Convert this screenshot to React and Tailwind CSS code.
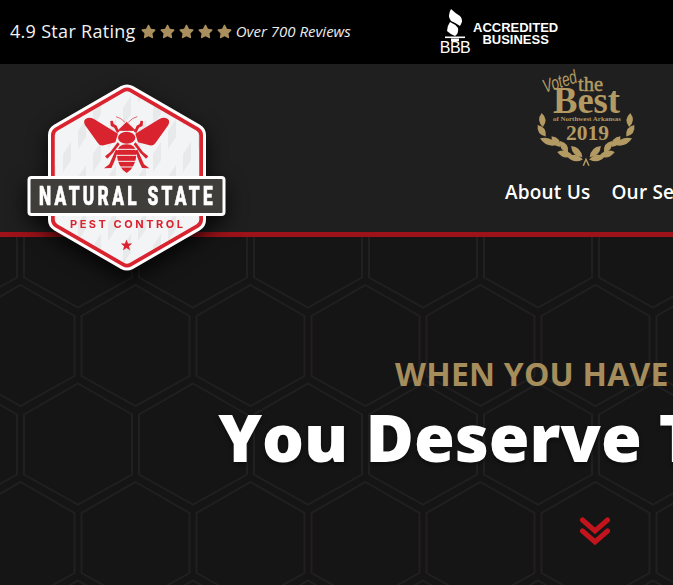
import React from "react";
import { FaStar } from "react-icons/fa";

// Background honeycomb, one outline per cell.
const hexRows = [-1, 0, 1, 2, 3, 4];
const hexCols = [-1, 0, 1, 2, 3, 4, 5, 6, 7, 8, 9, 10];

const Honeycomb = () => (
  <svg className="absolute left-0 top-0 w-[1190px] h-[348px]" viewBox="0 237 1190 348" fill="none">
    {hexRows.map((r) =>
      hexCols.map((c) => {
        const cx = 78 + c * 115 + (Math.abs(r) % 2 ? 57.5 : 0);
        const t = 186.5 + r * 98.5;
        return (
          <polygon
            key={r + "-" + c}
            points={`${cx},${t} ${cx + 54},${t + 31} ${cx + 54},${t + 91} ${cx},${t + 121} ${cx - 54},${t + 91} ${cx - 54},${t + 31}`}
            stroke="#211f1f"
            strokeWidth="2"
          />
        );
      })
    )}
  </svg>
);

const BeeHalf = () => (
  <g fill="#d9232e">
    <path d="M30 60 Q22 44 38 39 Q47 37 58 43 L129 86 L121 112 L86 121 Q74 123 68 113 Z" />
    <path d="M126 84 L118 68 L107 62 L106 48 L113 47 L116 57 L125 62 L133 80 Z" />
    <path d="M128 112 L134 118 L113 145 L97 161 L90 154 L106 141 Z" />
    <path d="M123 133 L130 138 L117 172 L109 189 L87 190 L103 178 Z" />
    <path d="M150 52 Q138 38 123 35" fill="none" stroke="#d9232e" strokeWidth="2" />
  </g>
);

const hexPoints = "127,96.5 194,135.2 194,219.8 127,258.5 60,219.8 60,135.2";

const Logo = () => (
  <svg
    className="absolute left-0 top-0 z-10 w-[240px] h-[290px] drop-shadow-[0_8px_10px_rgba(0,0,0,0.8)]"
    viewBox="0 0 240 290"
  >
    <defs>
      <pattern id="tiles" width="30" height="46" patternUnits="userSpaceOnUse">
        <rect width="30" height="46" fill="#f3f4f6" />
        <path d="M3 16 L11 4 L11 22 L3 34 Z M18 39 L26 27 L26 45 L18 57 Z M18 -7 L26 -19 L26 -1 L18 11 Z" fill="#e8e9eb" />
      </pattern>
    </defs>
    <polygon points={hexPoints} fill="#fff" stroke="#fff" strokeWidth="24" strokeLinejoin="round" />
    <polygon points={hexPoints} fill="#d9232e" stroke="#d9232e" strokeWidth="18" strokeLinejoin="round" />
    <polygon points={hexPoints} fill="url(#tiles)" stroke="url(#tiles)" strokeWidth="10.5" strokeLinejoin="round" />

    {/* bee, drawn on a 3x grid */}
    <g transform="translate(75 105) scale(0.3333)">
      <BeeHalf />
      <g transform="translate(310 0) scale(-1 1)">
        <BeeHalf />
      </g>
      <g fill="#d9232e">
        <path d="M155 52 L180 76 L130 76 Z" stroke="#d9232e" strokeWidth="3" strokeLinejoin="round" />
        <ellipse cx="155" cy="98" rx="26" ry="18" />
        <path d="M155 118 Q127 118 126 145 Q126 175 143 194 L155 204 L167 194 Q184 175 184 145 Q183 118 155 118 Z" />
      </g>
      <g stroke="#f4f5f7" strokeWidth="3">
        <line x1="124" y1="133" x2="186" y2="133" />
        <line x1="124" y1="151" x2="186" y2="151" />
        <line x1="124" y1="169" x2="186" y2="169" />
        <line x1="130" y1="186" x2="180" y2="186" />
      </g>
    </g>

    <rect x="29" y="177.5" width="195" height="37" rx="2.5" fill="#3f3e3a" stroke="#fff" strokeWidth="3" />
    <text
      x="39"
      y="205"
      fill="#fff"
      stroke="#fff"
      strokeWidth="0.6"
      fontFamily="Roboto, sans-serif"
      fontWeight="900"
      fontSize="26"
      letterSpacing="5"
      textLength="177"
      lengthAdjust="spacingAndGlyphs"
    >
      NATURAL STATE
    </text>
    <text
      x="70"
      y="228"
      fill="#d9232e"
      fontFamily="Inter, sans-serif"
      fontWeight="700"
      fontSize="11"
      textLength="113"
      lengthAdjust="spacing"
    >
      PEST CONTROL
    </text>
    <polygon
      points="126.5,239.5 128,243.4 132.2,243.6 128.9,246.2 130,250.3 126.5,248 123,250.3 124.1,246.2 120.8,243.6 125,243.4"
      fill="#d9232e"
    />
  </svg>
);

// x, y, rotation, half length
const leaves = [
  [12.3, 56, 85, 7],
  [11.7, 66.7, 55, 7],
  [18.3, 77.7, 22, 9],
  [26, 77.7, 50, 7],
  [34, 82.7, 55, 7],
  [35, 90, 15, 8],
  [46.7, 87.7, 45, 8],
  [45, 94, 10, 8],
];

const Leaf = ({ x, y, rot, len }) => (
  <path transform={`translate(${x} ${y}) rotate(${rot})`} d={`M${-len} 0 Q0 -6.5 ${len} 0 Q0 6.5 ${-len} 0 Z`} />
);

// Voted the Best award
const Award = () => (
  <svg className="w-[110px] h-[108px] shrink-0 overflow-visible" viewBox="0 0 110 108" fill="#b39a63">
    <text
      x="15"
      y="29"
      fontFamily="'Liberation Sans', sans-serif"
      fontStyle="italic"
      fontSize="19"
      textLength="35"
      lengthAdjust="spacingAndGlyphs"
      transform="rotate(-18 15 29)"
    >
      Voted
    </text>
    <text x="48" y="27" fontFamily="'Liberation Serif', serif" fontSize="22" stroke="#b39a63" strokeWidth="0.5" textLength="25" lengthAdjust="spacingAndGlyphs">
      the
    </text>
    <text x="23" y="48.5" fontFamily="'Liberation Serif', serif" fontWeight="700" fontSize="38" textLength="67" lengthAdjust="spacingAndGlyphs">
      Best
    </text>
    <text x="23" y="56.5" fontFamily="'Liberation Serif', serif" fontWeight="700" fontSize="6.5" textLength="68" lengthAdjust="spacingAndGlyphs">
      of Northwest Arkansas
    </text>
    <text x="36" y="76" fontFamily="'Liberation Serif', serif" fontWeight="700" fontSize="20" textLength="43" lengthAdjust="spacingAndGlyphs">
      2019
    </text>
    {leaves.map(([x, y, rot, len]) => (
      <g key={x + "-" + y}>
        <Leaf x={x} y={y} rot={rot} len={len} />
        <Leaf x={112 - x} y={y} rot={-rot} len={len} />
      </g>
    ))}
    <path d="M53.3 101.7 L56 95.3 L59 101.7" fill="none" stroke="#b39a63" strokeWidth="1.5" />
  </svg>
);

const BbbBadge = () => (
  <div className="flex items-center text-white font-['Liberation_Sans',sans-serif]">
    <div className="flex flex-col items-center w-[30px]">
      <svg className="w-[22px] h-[32px]" viewBox="0 0 22 32" fill="#fff">
        <path d="M7 0 Q11 4 16 7 Q20 11 16 17 Q12 14 7 12 Q3 7 7 0 Z" />
        <path d="M6 13 Q11 15 14 19 Q15 24 11 27 Q6 25 3 22 Q3 17 6 13 Z" />
        <rect x="1" y="27.5" width="20" height="1.6" />
        <rect x="7" y="29.5" width="8" height="2.5" />
      </svg>
      <span className="text-[16px] leading-[13px] font-normal tracking-[-0.5px]">BBB</span>
    </div>
    <div className="ml-[3px] mt-[6px] text-center text-[13px] leading-[12px] font-bold">
      <div>ACCREDITED</div>
      <div>BUSINESS</div>
    </div>
  </div>
);

const App = () => {
  return (
    <div className="relative w-[673px] h-[585px] overflow-hidden flex flex-col bg-[#161516] whitespace-nowrap font-['Open_Sans',sans-serif]">
      <Logo />

      {/* top strip */}
      <div className="h-[64px] shrink-0 bg-black flex items-center pl-[10px] pb-[2px] w-[1190px]">
        <div className="w-[430px] flex items-center">
          <span className="text-[18px] tracking-[0.3px] text-[#f2f2f2]">4.9 Star Rating</span>
          <div className="flex gap-[4px] ml-[5px] text-[#a98f5e]">
            <FaStar size={15} />
            <FaStar size={15} />
            <FaStar size={15} />
            <FaStar size={15} />
            <FaStar size={15} />
          </div>
          <span className="ml-[4px] text-[15px] italic text-[#ececec]">Over 700 Reviews</span>
        </div>
        <BbbBadge />
      </div>

      {/* header */}
      <div className="h-[173px] shrink-0 bg-[#1f1f1f] border-b-[5px] border-[#9e1219] pl-[505px] w-[1190px]">
        <div className="ml-[25px]">
          <Award />
        </div>
        <nav className="flex gap-[21px] mt-[6px] text-[19px] tracking-[0.2px] font-semibold text-white">
          <a>About Us</a>
          <a>Our Services</a>
        </nav>
      </div>

      {/* hero */}
      <div className="relative flex-1 w-[1190px] overflow-hidden">
        <Honeycomb />
        <div className="relative flex flex-col items-center pt-[115px]">
          <div className="pr-[25px] text-[32px] leading-[44px] font-bold tracking-[0.2px] text-[#a68d5c]">WHEN YOU HAVE PESTS</div>
          <h1 className="pr-[22px] text-[66px] leading-[80px] font-extrabold text-white [text-shadow:0_2px_4px_rgba(0,0,0,0.5)]">
            You Deserve The Best
          </h1>
          <svg className="w-[32px] h-[32px] mt-[41px]" viewBox="0 0 32 32" fill="none" stroke="#c2141c" strokeWidth="5">
            <polyline points="3.5,3 16,14 28.5,3" strokeLinecap="round" />
            <polyline points="3.5,14 16,25 28.5,14" strokeLinecap="round" />
          </svg>
        </div>
      </div>
    </div>
  );
};

export default App;
